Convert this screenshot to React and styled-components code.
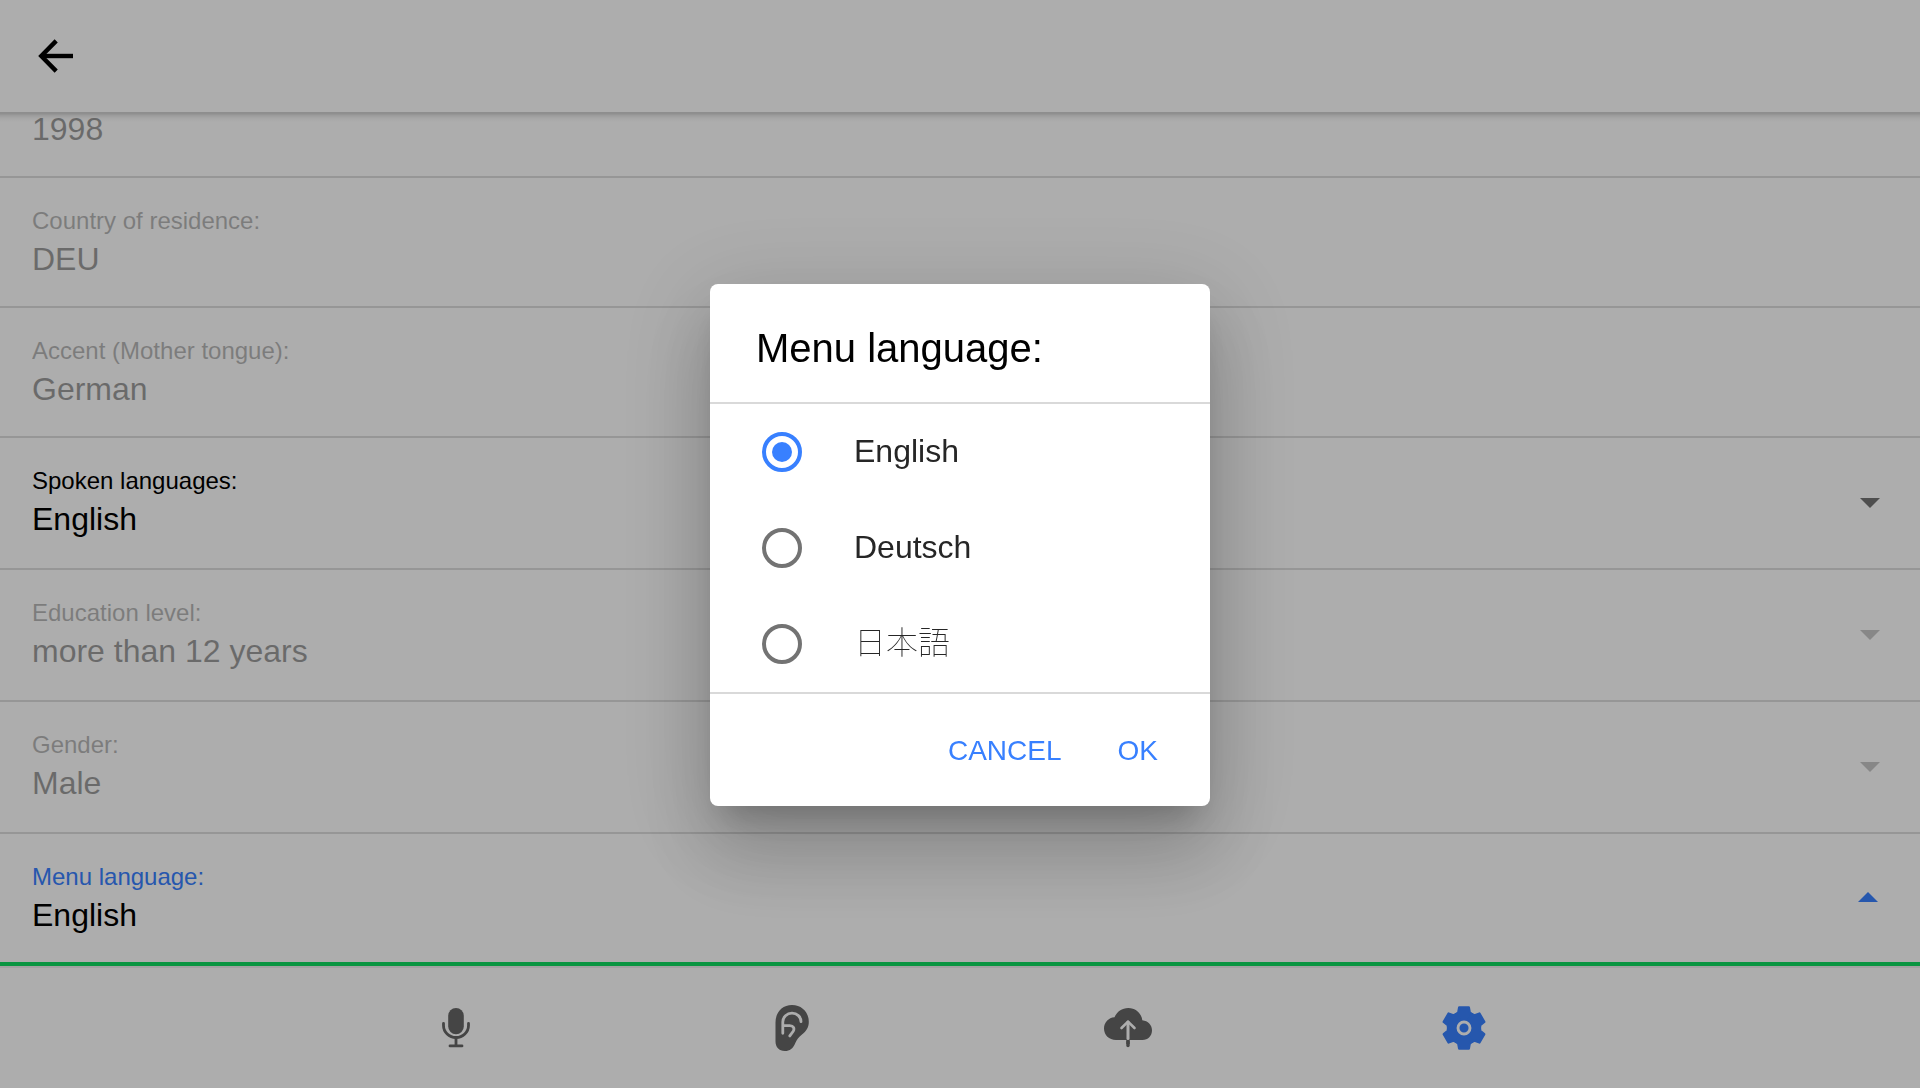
import React from "react";
import styled, { createGlobalStyle } from "styled-components";

const Global = createGlobalStyle`
  * { box-sizing: border-box; }
  body { margin: 0; background: #fff; font-family: "Liberation Sans", Arial, "Noto Sans CJK JP", sans-serif; }
  button { font: inherit; border: 0; padding: 0; background: none; }
`;

const Page = styled.div`
  display: flex;
  flex-direction: column;
  height: 1088px;
  overflow: hidden;
`;

const Header = styled.header`
  position: relative;
  display: flex;
  align-items: center;
  flex: none;
  height: 112px;
  padding-left: 38px;
  background: #fff;
  z-index: 1;
  &::after {
    content: "";
    position: absolute;
    left: 0;
    right: 0;
    top: 100%;
    height: 10px;
    background: linear-gradient(
      rgba(0, 0, 0, 0.18) 0,
      rgba(0, 0, 0, 0.17) 2px,
      rgba(0, 0, 0, 0.11) 3px,
      rgba(0, 0, 0, 0.04) 6px,
      rgba(0, 0, 0, 0) 10px
    );
  }
`;

const List = styled.main`
  flex: 1;
  min-height: 0;
  display: flex;
  flex-direction: column;
  justify-content: flex-end;
  overflow: hidden;
`;

const Row = styled.div`
  flex: none;
  display: flex;
  justify-content: space-between;
  height: ${(p) => (p.$select ? 132 : 130)}px;
  padding: 29px 40px 0 32px;
  border-bottom: ${(p) => (p.$active ? "4px solid #10dc60" : "2px solid #dedede")};
`;

const Label = styled.div`
  height: 28px;
  font-size: 24px;
  line-height: 28px;
  color: ${(p) => (p.$active ? "#3880ff" : "#000")};
  opacity: ${(p) => (p.$disabled ? 0.28 : 1)};
`;

const Value = styled.div`
  margin-top: 7px;
  font-size: 32px;
  line-height: 34px;
  color: #000;
  opacity: ${(p) => (p.$disabled ? 0.38 : 1)};
`;

const Caret = styled.span`
  width: 20px;
  height: 10px;
  margin-top: ${(p) => (p.$active ? 29 : 31)}px;
  margin-right: ${(p) => (p.$active ? 2 : 0)}px;
  background: ${(p) => (p.$active ? "#3880ff" : "#000")};
  opacity: ${(p) => (p.$active ? 1 : p.$disabled ? 0.22 : 0.55)};
  clip-path: ${(p) =>
    p.$active ? "polygon(50% 0, 100% 100%, 0 100%)" : "polygon(0 0, 100% 0, 50% 100%)"};
`;

const TabBar = styled.nav`
  flex: none;
  display: flex;
  justify-content: center;
  height: 122px;
  border-top: 2px solid rgba(0, 0, 0, 0.07);
  background: #fff;
`;

const Tab = styled.button`
  width: 336px;
  display: flex;
  align-items: center;
  justify-content: center;
  color: ${(p) => (p.$active ? "#3880ff" : "#666")};
`;

const Overlay = styled.div`
  position: fixed;
  inset: 0;
  z-index: 2;
  display: flex;
  align-items: center;
  justify-content: center;
  padding-top: 2px;
  background: rgba(0, 0, 0, 0.32);
`;

const Dialog = styled.section`
  width: 500px;
  height: 522px;
  border-radius: 8px;
  background: #fff;
  box-shadow: 0 22px 30px -14px rgba(0, 0, 0, 0.2), 0 48px 76px 6px rgba(0, 0, 0, 0.14),
    0 18px 92px 16px rgba(0, 0, 0, 0.12);
`;

const Title = styled.h2`
  margin: 0;
  height: 118px;
  padding: 41px 46px 0;
  font-size: 40px;
  font-weight: 400;
  line-height: 46px;
  color: #000;
`;

const Options = styled.div`
  border-top: 2px solid #d9d9d9;
  border-bottom: 2px solid #d9d9d9;
`;

const Option = styled.div`
  display: flex;
  align-items: center;
  height: 96px;
  padding-left: 52px;
`;

const Radio = styled.span`
  display: flex;
  align-items: center;
  justify-content: center;
  width: 40px;
  height: 40px;
  border-radius: 50%;
  border: 4px solid ${(p) => (p.$checked ? "#3880ff" : "#737373")};
  &::after {
    content: "";
    width: 20px;
    height: 20px;
    border-radius: 50%;
    background: ${(p) => (p.$checked ? "#3880ff" : "transparent")};
  }
`;

const OptionText = styled.span`
  margin-left: 52px;
  margin-top: -2px;
  font-size: 32px;
  font-weight: ${(p) => (p.$thin ? 100 : 400)};
  line-height: 38px;
  color: #262626;
`;

const Actions = styled.div`
  display: flex;
  justify-content: flex-end;
  gap: 56px;
  padding: 40px 52px 0 0;
`;

const Action = styled.button`
  && {
    font-size: 28px;
    line-height: 34px;
    color: #3880ff;
  }
`;

const rows = [
  { label: "", value: "1998", disabled: true },
  { label: "Country of residence:", value: "DEU", disabled: true },
  { label: "Accent (Mother tongue):", value: "German", disabled: true },
  { label: "Spoken languages:", value: "English", select: true },
  { label: "Education level:", value: "more than 12 years", select: true, disabled: true },
  { label: "Gender:", value: "Male", select: true, disabled: true },
  { label: "Menu language:", value: "English", select: true, active: true },
];

const options = [
  { text: "English", checked: true },
  { text: "Deutsch" },
  { text: "日本語", thin: true },
];

const BackIcon = () => (
  <svg width="36" height="34" viewBox="0 0 36 34" fill="none" stroke="#000" strokeWidth="4.4">
    <path d="M18.200 1.900L3.300 17l14.900 15.100" />
    <path d="M35 17H4" />
  </svg>
);

const MicIcon = () => (
  <svg width="28" height="40" viewBox="0 0 28 40">
    <rect x="6.200" y="0" width="15.600" height="26.200" rx="7.800" fill="currentColor" />
    <g fill="none" stroke="currentColor" strokeWidth="2.800" strokeLinecap="round">
      <path d="M1.500 15.400V17.500a12.500 12 0 0 0 25 0V15.400" />
      <path d="M14 30v7.500" />
      <path d="M8 37.900h12" />
    </g>
  </svg>
);

const EarIcon = () => (
  <svg width="34" height="46" viewBox="0 0 34 46">
    <path
      fill="currentColor"
      d="M.5 17.500C.5 7.500 7.200 0 17 0s16.800 7.200 16.800 16.800c0 6-2.600 9.400-6.800 12.600-3.400 2.600-5.200 5-6.800 8.800C18.300 43.200 14.800 46 9.800 46 4 46 .5 42 .5 36.500z"
    />
    <path
      d="M7.800 28.300V17C7.800 12 11.900 8.200 17 8.200s9 3.600 9 8.500M7.800 20.700h7c3.800 0 5 3 3.400 5.600l-3.400 4.600"
      fill="none"
      stroke="#fff"
      strokeWidth="2.800"
      strokeLinecap="round"
    />
  </svg>
);

const CloudIcon = () => (
  <svg width="48" height="40" viewBox="0 0 48 40">
    <path
      fill="currentColor"
      d="M12 32C5 32 0 27 0 20.500 0 14.500 4.500 9.700 10.500 9.300 13 3.500 18 0 24.300 0c7.200 0 13.200 5 14 12.300C44 13 48 17 48 22.300 48 28 44 32 38.500 32z"
    />
    <g fill="none" strokeLinecap="round" strokeLinejoin="round">
      <path d="M17.500 20L24 13.600l6.500 6.400" stroke="#fff" strokeWidth="2.600" />
      <path d="M24 14v16.600" stroke="#fff" strokeWidth="3" />
      <path d="M24 33.800v3.800" stroke="currentColor" strokeWidth="3.400" />
    </g>
    <rect x="22.300" y="32" width="3.400" height="4" fill="currentColor" />
  </svg>
);

const GearIcon = () => (
  <svg width="44" height="44" viewBox="-22 -22 44 44">
    <g fill="currentColor" stroke="currentColor" strokeWidth="2.400" strokeLinejoin="round">
      {[0, 60, 120, 180, 240, 300].map((a) => (
        <path key={a} transform={`rotate(${a})`} d="M0 0L-8 -13.700L-5.700 -15.500L-4.800 -20.600H4.800L5.700 -15.500L8 -13.700z" />
      ))}
    </g>
    <circle r="6" fill="none" stroke="#fff" strokeWidth="2.900" />
  </svg>
);

export default function App() {
  return (
    <>
      <Global />
      <Page>
        <Header>
          <BackIcon />
        </Header>
        <List>
          {rows.map((r) => (
            <Row key={r.label} $select={r.select} $active={r.active}>
              <div>
                <Label $active={r.active} $disabled={r.disabled}>{r.label}</Label>
                <Value $disabled={r.disabled}>{r.value}</Value>
              </div>
              {r.select && <Caret $active={r.active} $disabled={r.disabled} />}
            </Row>
          ))}
        </List>
        <TabBar>
          <Tab><MicIcon /></Tab>
          <Tab><EarIcon /></Tab>
          <Tab><CloudIcon /></Tab>
          <Tab $active><GearIcon /></Tab>
        </TabBar>
      </Page>
      <Overlay>
        <Dialog>
          <Title>Menu language:</Title>
          <Options>
            {options.map((o) => (
              <Option key={o.text}>
                <Radio $checked={o.checked} />
                <OptionText $thin={o.thin}>{o.text}</OptionText>
              </Option>
            ))}
          </Options>
          <Actions>
            <Action>CANCEL</Action>
            <Action>OK</Action>
          </Actions>
        </Dialog>
      </Overlay>
    </>
  );
}
